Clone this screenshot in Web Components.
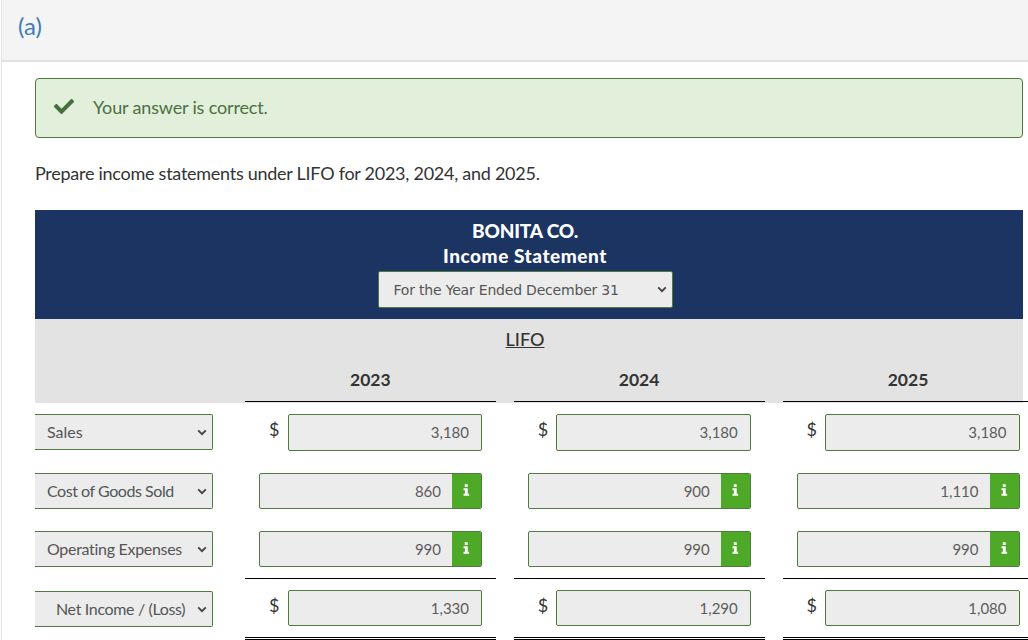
<!DOCTYPE html>
<html><head><meta charset="utf-8">
<style>
html,body{margin:0;padding:0;background:#fff;overflow:hidden;height:640px;width:1028px}
body{font-family:Lato,"Open Sans",sans-serif}
</style></head><body>
<q-page>
  <q-head>(a)</q-head>
  <q-alert>Your answer is correct.</q-alert>
  <q-prompt>Prepare income statements under LIFO for 2023, 2024, and 2025.</q-prompt>
  <q-statement>
    <q-banner company="BONITA CO." title="Income Statement" period="For the Year Ended December 31"></q-banner>
    <q-columns label="LIFO" years="2023,2024,2025"></q-columns>
    <q-row label="Sales" kind="first" dollars track="0" values="3,180|3,180|3,180"></q-row>
    <q-row label="Cost of Goods Sold" info track="-.45" values="860|900|1,110"></q-row>
    <q-row label="Operating Expenses" info kind="rule" track="-.3" values="990|990|990"></q-row>
    <q-row label="Net Income / (Loss)" kind="total" dollars track="-.35" values="1,330|1,290|1,080"></q-row>
  </q-statement>
</q-page>
<script>
function def(name, css, render){
  customElements.define(name, class extends HTMLElement{
    connectedCallback(){
      if(this.shadowRoot) return;
      const s=this.attachShadow({mode:'open'});
      s.innerHTML='<style>'+css+'</style>'+render(this);
    }
  });
}
const chev='<svg width="10" height="7" viewBox="0 0 10 7" aria-hidden="true"><path d="M1.2 1.4 5 5.2 8.8 1.4" fill="none" stroke="#444" stroke-width="1.9"/></svg>';
const infoIcon='<svg width="7" height="12" viewBox="0 0 8 13" aria-hidden="true"><path d="M2 0h3.4v3H2zM.6 4.6h4.8v6.3H7V13H.6v-2.1h1.6V6.7H.6z" fill="#fff"/></svg>';
const checkIcon='<svg width="20" height="15" viewBox="0 64 512 384" aria-hidden="true"><path fill="#43703c" d="M173.898 439.404l-166.4-166.4c-9.997-9.997-9.997-26.206 0-36.204l36.203-36.204c9.997-9.998 26.207-9.998 36.204 0L192 312.69 432.095 72.596c9.997-9.997 26.207-9.997 36.204 0l36.203 36.204c9.997 9.997 9.997 26.206 0 36.204l-294.4 294.401c-9.998 9.997-26.207 9.997-36.204-.001z"/></svg>';

def('q-page',`:host{display:block;width:1027px;height:640px;overflow:hidden;box-sizing:border-box;border-left:1px solid #e0e0e0;margin-left:1px}`,()=>'<slot></slot>');

def('q-head',`:host{display:block;background:#f4f4f4;border-bottom:2px solid #e2e2e2;padding:11px 0 0 16px;height:49px;font-size:24px;line-height:30px;color:#3f7cb8}`,()=>'<slot></slot>');

def('q-alert',`:host{display:flex;align-items:center;gap:19px;box-sizing:border-box;width:988px;height:60px;margin:16px 0 0 33px;padding:0 0 0 18px;background:#e2efda;border:1px solid #4f7a3f;border-radius:4px;color:#4c7044;font-size:18px;letter-spacing:-.16px}
svg{flex:none;margin-top:-3px}
span{margin-top:-2px}`,()=>checkIcon+'<span><slot></slot></span>');

def('q-prompt',`:host{display:block;margin:23px 0 0 33px;height:24px;font-size:18px;line-height:24px;color:#333;letter-spacing:-.265px;white-space:nowrap}`,()=>'<slot></slot>');

def('q-statement',`:host{display:block;margin:25px 0 0 33px;width:1000px}`,()=>'<slot></slot>');

def('q-banner',`:host{display:flex;flex-direction:column;align-items:center;box-sizing:border-box;width:988px;height:109px;background:#1c3461;color:#fff;padding:8px 8px 0 0;font-size:19px;font-weight:900;line-height:26px}
.a{letter-spacing:-.15px}.b{letter-spacing:.55px;margin-top:-1px}
.sel{display:flex;align-items:center;justify-content:space-between;box-sizing:border-box;width:295px;height:37px;margin-top:2px;padding:0 5px 0 15px;background:#ececec;border:1px solid #4f7a3f;border-radius:2px;color:#555;font-family:"DejaVu Sans",sans-serif;font-weight:400;font-size:14px;letter-spacing:-.2px}
.sel span{margin-top:1px}`,
h=>`<div class="a">${h.getAttribute('company')}</div><div class="b">${h.getAttribute('title')}</div><div class="sel"><span>${h.getAttribute('period')}</span>${chev}</div>`);

def('q-columns',`:host{display:block;box-sizing:border-box;width:988px;height:84px;background:#e3e3e3;color:#333}
.lab{text-align:center;height:41px;padding:8px 8px 0 0;box-sizing:border-box;font-size:18px;line-height:24px;text-decoration:underline;font-weight:500}
.g{display:grid;grid-template-columns:250.75px 250.75px 251px;column-gap:18px;margin-left:210px;width:800px}
.y{height:42px;box-sizing:border-box;padding-top:8px;text-align:center;font-size:17.5px;font-weight:700;line-height:24px;border-bottom:1px solid #000}`,
h=>`<div class="lab">${h.getAttribute('label')}</div><div class="g">${h.getAttribute('years').split(',').map(y=>`<div class="y">${y}</div>`).join('')}</div>`);

def('q-field',`:host{display:flex;align-items:flex-start;width:237px;box-sizing:border-box}
.d{width:42.6px;padding-left:24px;box-sizing:border-box;font-size:18px;line-height:30px;color:#333;flex:none}
.box{flex:1;display:flex;height:36px;box-sizing:border-box;background:#ececec;border:1px solid #4f7a3f;border-radius:2px;overflow:hidden}
:host([tall]) .box{height:37px}
.v{flex:1;text-align:right;padding-right:12px;line-height:34px;font-size:15px;color:#5c5c5c}
:host([tall]) .v{line-height:35px}
:host([info]) .v{padding-right:11px}
.i{flex:none;width:29px;background:#4fa928;display:flex;align-items:center;justify-content:center}
.i svg{margin-top:-3px}
:host([info]) .box{margin-left:14px}`,
h=>{const inf=h.hasAttribute('info');return `${inf?'':'<div class="d">$</div>'}<div class="box"><div class="v"><slot></slot></div>${inf?`<div class="i">${infoIcon}</div>`:''}</div>`});

def('q-row',`:host{display:flex;align-items:flex-start;width:1000px;box-sizing:border-box}
.l{flex:none;display:flex;align-items:center;justify-content:space-between;box-sizing:border-box;width:178px;height:36px;margin:11px 32px 0 0;background:#ececec;border:1px solid #4f7a3f;border-left:0;border-radius:0 2px 2px 0;padding:0 5px 0 12px;font-size:16px;color:#555;white-space:nowrap}
.l span{margin-top:-1px}
.cols{display:grid;grid-template-columns:250.75px 250.75px 251px;column-gap:18px;width:800px;flex:none}
.cell{box-sizing:border-box;padding-top:11px;height:58px}
:host([kind=first]) .cell{height:59px}
:host([kind=rule]) .cell{height:59px;border-bottom:1px solid #000}
:host([kind=total]) .cell{height:61px;border-bottom:3px double #000}
:host([kind=total]) .l{margin-top:12px;padding-left:21px}`,
h=>{
 const vals=h.getAttribute('values').split('|');
 const inf=h.hasAttribute('info');
 const tall=h.getAttribute('kind')==='first';
 return `<div class="l"><span style="letter-spacing:${h.getAttribute('track')}px">${h.getAttribute('label')}</span>${chev}</div><div class="cols">${vals.map(v=>`<div class="cell"><q-field ${inf?'info':''} ${tall?'tall':''}>${v}</q-field></div>`).join('')}</div>`;
});
</script>
</body></html>
